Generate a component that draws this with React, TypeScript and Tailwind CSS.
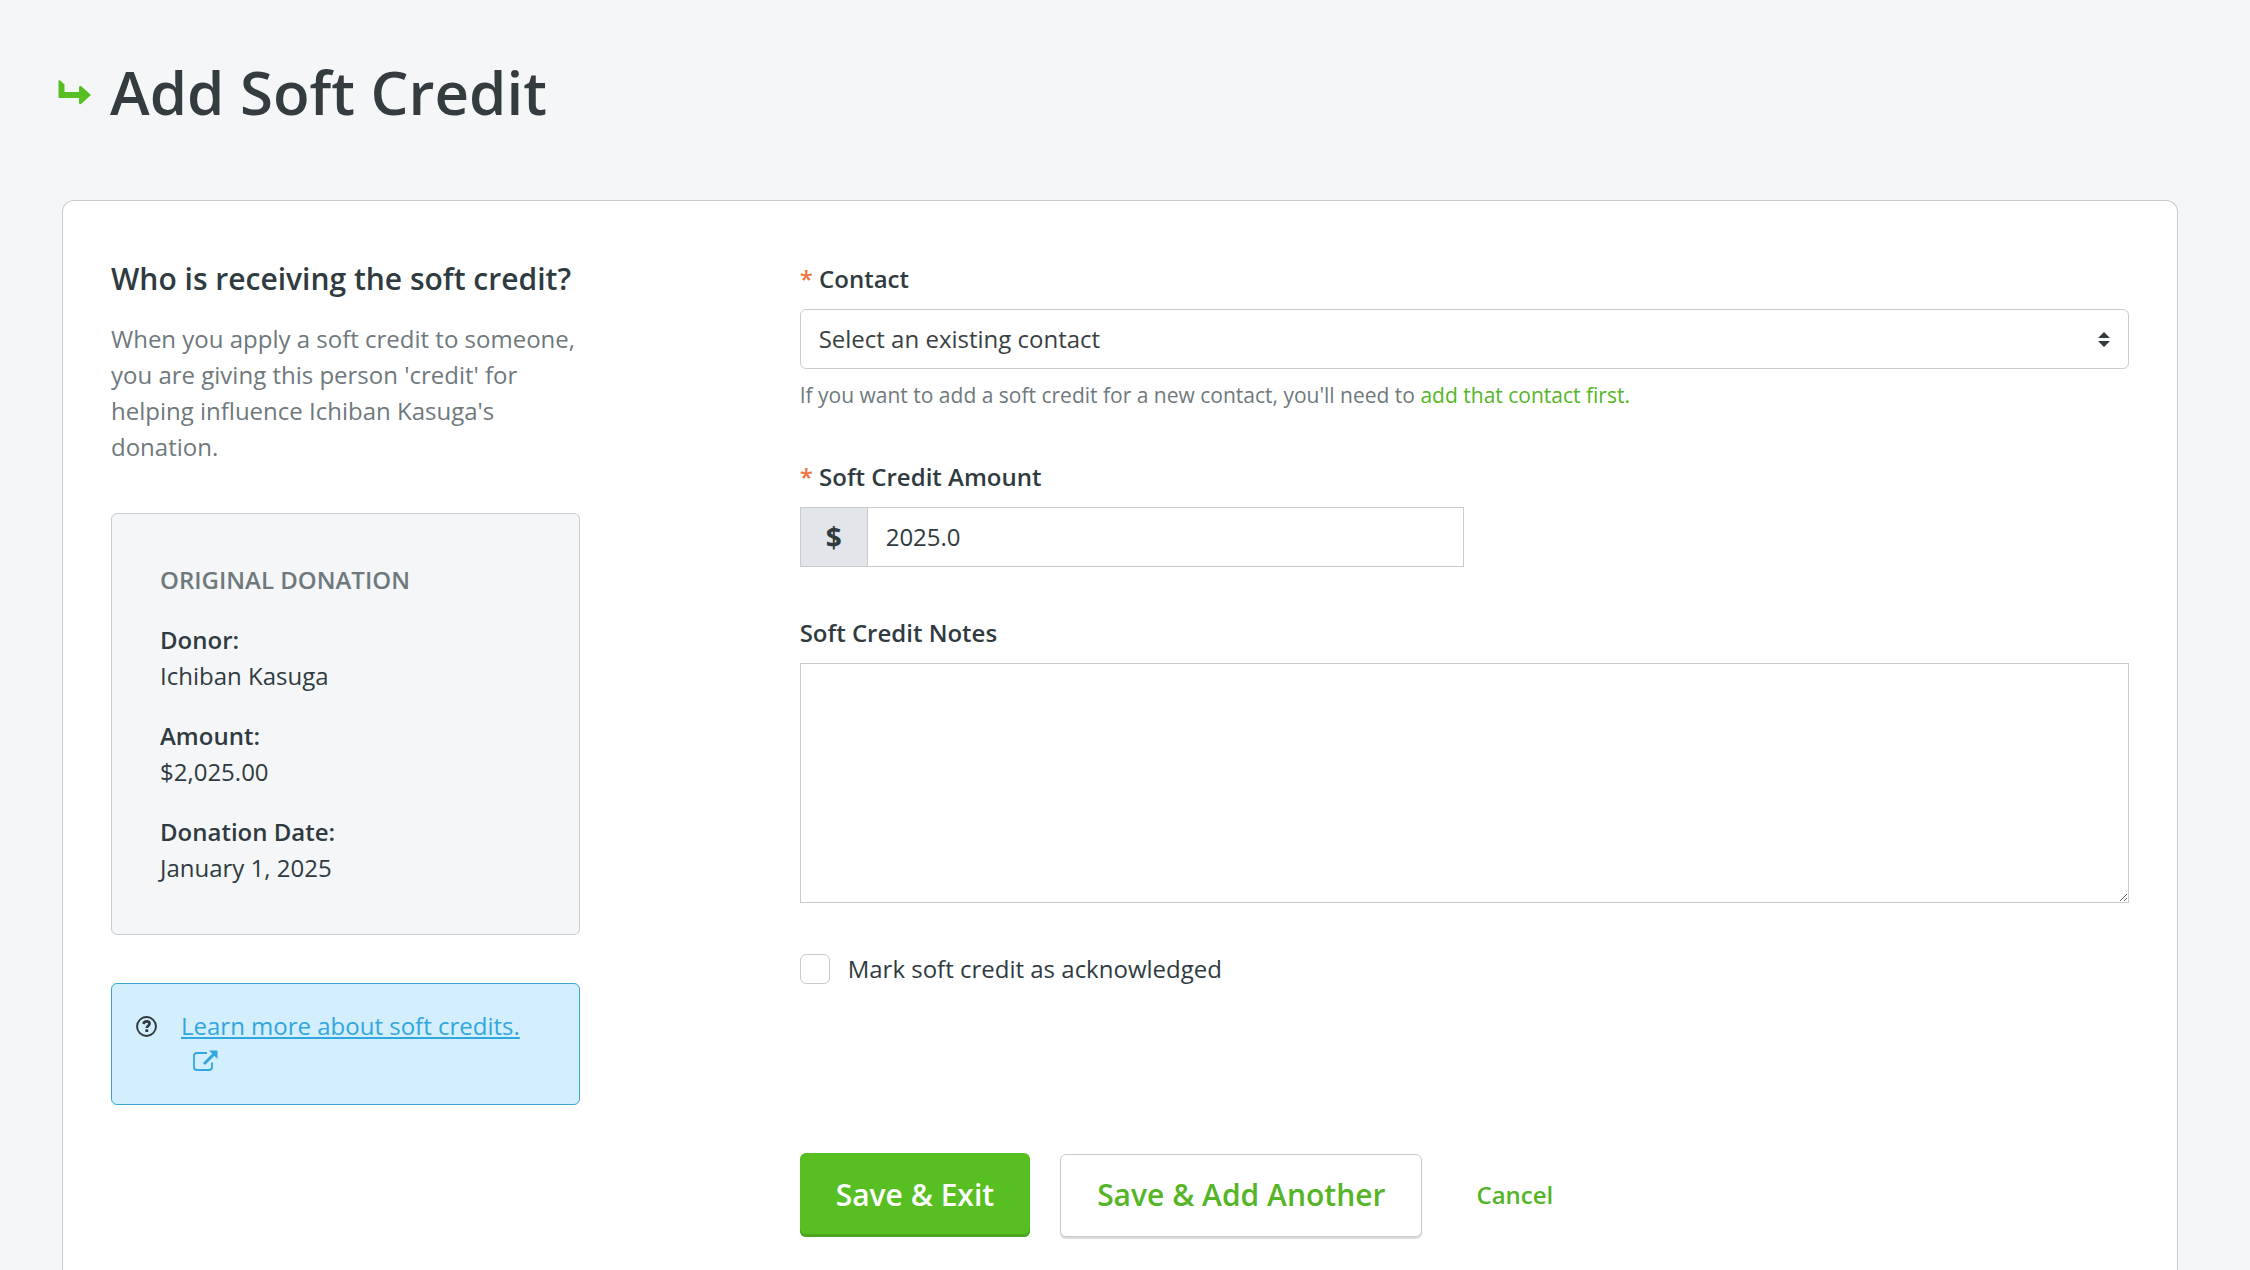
import { useState } from "react";

const donation = [
  { label: "Donor:", value: "Ichiban Kasuga" },
  { label: "Amount:", value: "$2,025.00" },
  { label: "Donation Date:", value: "January 1, 2025" },
];

function ArrowIcon() {
  return (
    <svg viewBox="0 0 33 25" className="h-[25px] w-[33px]" fill="#58bf22" aria-hidden="true">
      <path d="M0.5 0.5 Q1.5 0 2.5 0.8 L6.5 4.5 V12 H21 V7 Q21.5 5.5 23 6 L33 15 L23 24 Q21.5 24.5 21 23 V18 H1.5 Q0.5 18 0.5 17 Z" />
    </svg>
  );
}

function HelpIcon() {
  return (
    <svg viewBox="0 0 22 22" className="size-[21px] shrink-0" fill="none" aria-hidden="true">
      <circle cx="11" cy="11" r="9.9" stroke="#2f383c" strokeWidth="2" />
      <path d="M7.6 8.2 C8.6 6.2 9.8 5.7 11.2 5.7 C13 5.7 14.2 6.7 14.2 8.1 C14.2 10.3 11.3 10.2 11.3 12.6" stroke="#2f383c" strokeWidth="2.8" />
      <rect x="9.8" y="14" width="3" height="2.8" rx="0.4" fill="#2f383c" />
    </svg>
  );
}

function ExternalIcon() {
  return (
    <svg viewBox="0 0 25 22" className="h-[22px] w-[25px]" fill="none" aria-hidden="true">
      <path d="M14 3 H4 Q1 3 1 6 V17 Q1 20 4 20 H16 Q19 20 19 17 V12.5" stroke="#31a7e0" strokeWidth="1.8" />
      <path d="M11 14 L21 4" stroke="#31a7e0" strokeWidth="3" />
      <path d="M16 0.5 H24.5 V9 Z" fill="#31a7e0" />
    </svg>
  );
}

function SortIcon() {
  return (
    <svg viewBox="0 0 12 15" className="pointer-events-none absolute right-[19px] top-[23px] h-[15px] w-3" fill="#333a3e" aria-hidden="true">
      <path d="M6 0 L12 6 H0 Z M0 9 H12 L6 15 Z" />
    </svg>
  );
}

export default function App() {
  const [contact, setContact] = useState("");
  const [amount, setAmount] = useState("2025.0");
  const [notes, setNotes] = useState("");
  const [acknowledged, setAcknowledged] = useState(false);

  return (
    <div className="flex min-h-screen flex-col bg-[#f4f6f8] pl-[62px] pr-[72px] font-['Open_Sans',sans-serif] text-2xl leading-9 text-[#2f3b40]">
      <header className="-ml-1 flex h-[200px] items-start gap-[19px] pt-[50px]">
        <div className="flex h-[84px] items-center">
          <ArrowIcon />
        </div>
        <h1 className="text-[60px] font-semibold leading-[84px] text-[#343c40]">Add Soft Credit</h1>
      </header>

      <main className="grid flex-1 grid-cols-12 content-start gap-x-12 rounded-t-xl border border-b-0 border-[#c9cbcd] bg-white px-12 pb-8 pt-[60px]">
        <aside className="col-span-3">
          <h2 className="text-3xl font-semibold leading-9">Who is receiving the soft credit?</h2>
          <p className="mt-6 text-[#6f797d]">
            When you apply a soft credit to someone, you are giving this person 'credit' for helping influence Ichiban Kasuga's donation.
          </p>

          <section className="mt-12 rounded-md border border-[#c9cbcd] bg-[#f4f6f8] p-12">
            <h3 className="font-semibold uppercase text-[#6f797d]">Original Donation</h3>
            <dl>
              {donation.map((item) => (
                <div key={item.label} className="mt-6">
                  <dt className="font-semibold">{item.label}</dt>
                  <dd>{item.value}</dd>
                </div>
              ))}
            </dl>
          </section>

          <div className="mt-12 flex items-start gap-6 rounded-md border border-[#3ea5d0] bg-[#d3eefc] p-6">
            <div className="flex h-9 items-center">
              <HelpIcon />
            </div>
            <a href="#learn" className="text-[#31a7e0]">
              <span className="block underline decoration-2 underline-offset-2">Learn more about soft credits.</span>
              <span className="flex h-9 items-start pl-3 pt-1.5">
                <ExternalIcon />
              </span>
            </a>
          </div>
        </aside>

        <form className="col-span-8 col-start-5" onSubmit={(e) => e.preventDefault()}>
          <label htmlFor="contact" className="block font-semibold">
            <span className="text-[#ee7444]">*</span> Contact
          </label>
          <div className="relative mt-3">
            <select
              id="contact"
              value={contact}
              onChange={(e) => setContact(e.target.value)}
              className="block h-[60px] w-full appearance-none rounded-md border border-[#c9cbcd] bg-white px-[18px] text-[#3b3f42]"
            >
              <option value="">Select an existing contact</option>
            </select>
            <SortIcon />
          </div>
          <p className="mt-2.5 text-[21px] leading-8 text-[#6f797d]">
            If you want to add a soft credit for a new contact, you'll need to{" "}
            <a href="#new-contact" className="text-[#55b527]">add that contact first.</a>
          </p>

          <label htmlFor="amount" className="mt-12 block font-semibold">
            <span className="text-[#ee7444]">*</span> Soft Credit Amount
          </label>
          <div className="mt-3 flex h-[60px] w-1/2 border border-[#c9cbcd]">
            <span className="flex w-[67px] items-center justify-center border-r border-[#c9cbcd] bg-[#e2e6ea] text-[28px] font-bold">$</span>
            <input
              id="amount"
              type="text"
              value={amount}
              onChange={(e) => setAmount(e.target.value)}
              className="min-w-0 flex-1 bg-white px-[18px]"
            />
          </div>

          <label htmlFor="notes" className="mt-12 block font-semibold">Soft Credit Notes</label>
          <textarea
            id="notes"
            value={notes}
            onChange={(e) => setNotes(e.target.value)}
            className="mt-3 block h-60 w-full resize border border-[#c9cbcd] bg-white p-3"
          />

          <div className="mt-12 flex h-9 items-center gap-[18px]">
            <input
              id="acknowledged"
              type="checkbox"
              checked={acknowledged}
              onChange={(e) => setAcknowledged(e.target.checked)}
              className="size-[30px] appearance-none rounded-md border border-[#c9cbcd] bg-white checked:bg-[#58bf22]"
            />
            <label htmlFor="acknowledged">Mark soft credit as acknowledged</label>
          </div>

          <div className="mt-[166px] flex items-center">
            <button type="submit" className="h-[84px] rounded-md bg-[#58bf22] px-9 text-3xl font-semibold text-white shadow-[inset_0_-3px_0_#4ba521]">
              Save &amp; Exit
            </button>
            <button type="button" className="ml-[30px] h-[83px] rounded-md border border-[#c9cbcd] bg-white px-9 text-3xl font-semibold text-[#55b527] shadow-[0_2px_1px_rgba(0,0,0,0.15)]">
              Save &amp; Add Another
            </button>
            <a href="#cancel" className="ml-[54px] font-semibold text-[#55b527]">Cancel</a>
          </div>
        </form>
      </main>
    </div>
  );
}
